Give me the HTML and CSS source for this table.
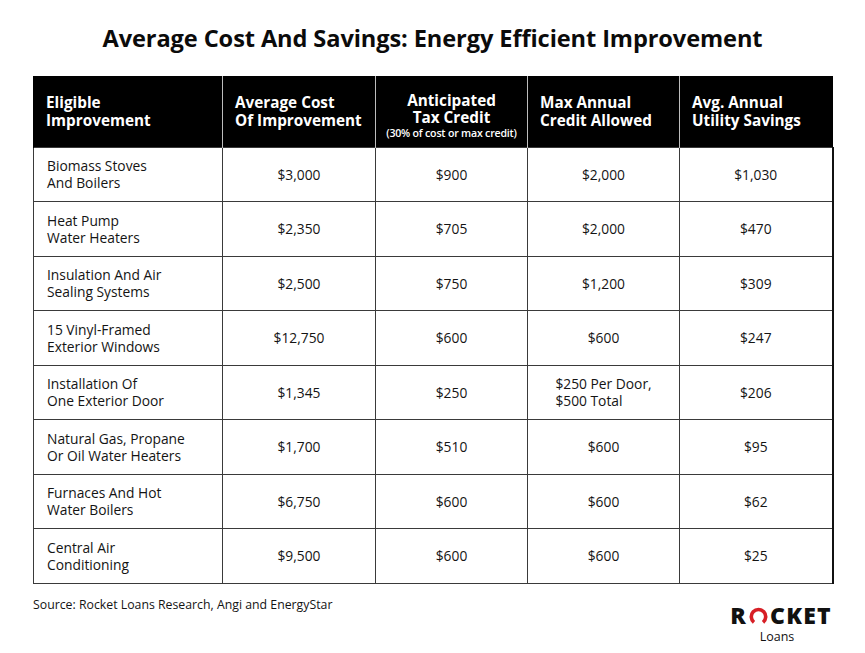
FILE: index.html
```html
<!DOCTYPE html>
<html lang="en">
<head>
<meta charset="utf-8">
<title>Average Cost And Savings</title>
<link rel="stylesheet" href="styles.css">
</head>
<body>
<div class="page">
  <h1 class="title">Average Cost And Savings: Energy Efficient Improvement</h1>
  <table class="grid">
    <colgroup>
      <col class="c1"><col class="c2"><col class="c3"><col class="c4"><col class="c5">
    </colgroup>
    <thead>
      <tr>
        <th class="left">Eligible<br>Improvement</th>
        <th class="left">Average Cost<br>Of Improvement</th>
        <th>Anticipated<br>Tax Credit<span class="note">(30% of cost or max credit)</span></th>
        <th class="left">Max Annual<br>Credit Allowed</th>
        <th class="left">Avg. Annual<br>Utility Savings</th>
      </tr>
    </thead>
    <tbody>
      <tr><td class="name">Biomass Stoves<br>And Boilers</td><td>$3,000</td><td>$900</td><td>$2,000</td><td>$1,030</td></tr>
      <tr><td class="name">Heat Pump<br>Water Heaters</td><td>$2,350</td><td>$705</td><td>$2,000</td><td>$470</td></tr>
      <tr><td class="name">Insulation And Air<br>Sealing Systems</td><td>$2,500</td><td>$750</td><td>$1,200</td><td>$309</td></tr>
      <tr><td class="name">15 Vinyl-Framed<br>Exterior Windows</td><td>$12,750</td><td>$600</td><td>$600</td><td>$247</td></tr>
      <tr><td class="name">Installation Of<br>One Exterior Door</td><td>$1,345</td><td>$250</td><td><span class="block">$250 Per Door,<br>$500 Total</span></td><td>$206</td></tr>
      <tr><td class="name">Natural Gas, Propane<br>Or Oil Water Heaters</td><td>$1,700</td><td>$510</td><td>$600</td><td>$95</td></tr>
      <tr><td class="name">Furnaces And Hot<br>Water Boilers</td><td>$6,750</td><td>$600</td><td>$600</td><td>$62</td></tr>
      <tr><td class="name">Central Air<br>Conditioning</td><td>$9,500</td><td>$600</td><td>$600</td><td>$25</td></tr>
    </tbody>
  </table>
  <div class="foot">
    <p class="source">Source: Rocket Loans Research, Angi and EnergyStar</p>
    <div class="logo">
      <div class="brand">R<svg class="ring" viewBox="0 0 20 20" width="21" height="19" aria-hidden="true"><path d="M5.2 17.2 A7.6 7.6 0 1 1 14.8 17.2" fill="none" stroke="#d71f26" stroke-width="3.8" stroke-linecap="butt"/></svg>CKET</div>
      <div class="sub">Loans</div>
    </div>
  </div>
</div>
</body>
</html>
```

FILE: styles.css
```css
* { box-sizing: border-box; }
html, body { margin: 0; padding: 0; background: #fff; }
body {
  font-family: "Open Sans", "Liberation Sans", sans-serif;
  color: #141414;
  width: 865px;
  height: 653px;
  overflow: hidden;
}
.page {
  padding: 23px 33px 0 33px;
}
.title {
  margin: 0;
  font-size: 23.6px;
  line-height: 30px;
  font-weight: 700;
  text-align: center;
  letter-spacing: -0.1px;
  color: #0b0b0b;
}
.grid {
  margin-top: 23px;
  width: 799px;
  border-collapse: collapse;
  table-layout: fixed;
}
.c1 { width: 189px; }
.c2 { width: 153px; }
.c3 { width: 152px; }
.c4 { width: 152px; }
.c5 { width: 153px; }
.grid th {
  background: #000;
  color: #fff;
  height: 71px;
  font-size: 15.3px;
  line-height: 18.5px;
  font-weight: 700;
  padding: 0 0 0 12px;
  text-align: left;
  vertical-align: middle;
  border-left: 1px solid #bdbdbd;
}
.grid th:first-child { border-left: 1px solid #000; }
.grid th:nth-child(3) {
  text-align: center;
  padding: 10px 0 0 0;
  line-height: 17px;
}
.note {
  display: block;
  font-size: 10.6px;
  line-height: 13px;
  font-weight: 600;
  letter-spacing: -0.2px;
  margin-top: 1px;
}
.grid td {
  height: 54.5px;
  border: 1px solid #3a3a3a;
  font-size: 13.8px;
  line-height: 17px;
  font-weight: 500;
  text-align: center;
  vertical-align: middle;
  padding: 0;
}
.grid td.name {
  text-align: left;
  padding-left: 13px;
}
.grid tr td:last-child { border-right: 2px solid #111; }
.block {
  display: inline-block;
  text-align: left;
}
.foot {
  display: flex;
  justify-content: space-between;
  align-items: flex-start;
  margin-top: 13px;
}
.source {
  margin: 0;
  font-size: 12.3px;
  line-height: 16px;
  font-weight: 500;
}
.logo {
  margin-top: 8px;
  display: flex;
  flex-direction: column;
  align-items: center;
  width: 106px;
  margin-right: -2px;
}
.brand {
  display: flex;
  align-items: center;
  font-size: 23px;
  line-height: 21px;
  font-weight: 800;
  letter-spacing: 1.2px;
  color: #111;
}
.ring {
  margin: 0 1px 0 1px;
}
.sub {
  font-size: 12.5px;
  line-height: 15px;
  font-weight: 500;
  margin-top: 3px;
  margin-right: 8px;
  color: #111;
}
```
